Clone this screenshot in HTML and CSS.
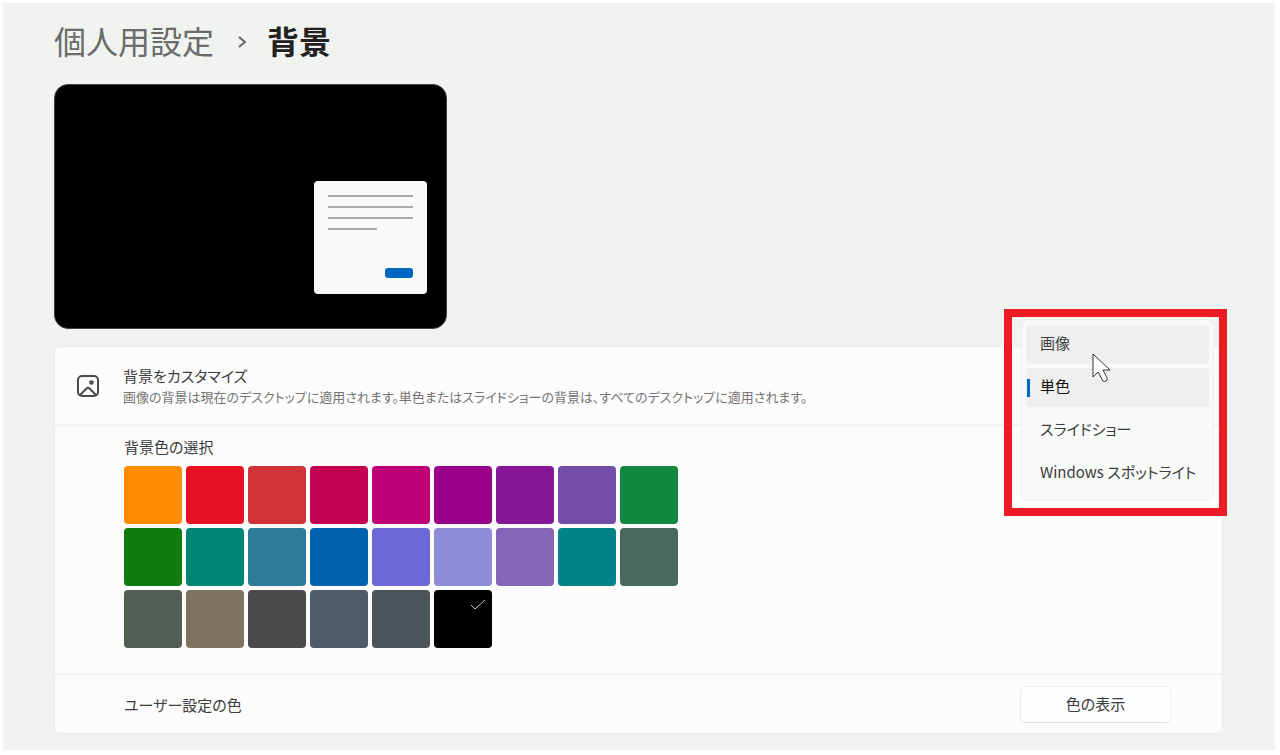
FILE: index.html
```html
<!DOCTYPE html>
<html lang="ja">
<head>
    <meta charset="UTF-8">
    <meta name="viewport" content="width=device-width, initial-scale=1.0">
    <title>個人用設定 - 背景</title>
    <link rel="stylesheet" href="styles.css">
</head>
<body>
    <main class="settings">
        <h1 class="breadcrumb">
            <a href="#">個人用設定</a>
            <svg class="chevron" viewBox="0 0 10 14" aria-hidden="true"><path d="M2 2l6 5-6 5"/></svg>
            <span>背景</span>
        </h1>

        <div class="preview">
            <div class="window">
                <div class="line"></div>
                <div class="line"></div>
                <div class="line"></div>
                <div class="line short"></div>
                <div class="windowButton"></div>
            </div>
        </div>

        <div class="card">
            <section class="customize">
                <svg class="pictureIcon" viewBox="0 0 24 24" aria-hidden="true">
                    <rect x="2" y="2" width="20" height="20" rx="4"/>
                    <path d="M4 21l6.500-6.500a2.200 2.200 0 0 1 3 0L20 21"/>
                    <circle cx="15.500" cy="8.500" r="1.300"/>
                </svg>
                <div>
                    <label class="title" for="backgroundType">背景をカスタマイズ</label>
                    <p class="description">画像の背景は現在のデスクトップに適用されます。単色またはスライドショーの背景は、すべてのデスクトップに適用されます。</p>
                </div>

                <div class="highlight">
                    <select class="menu" id="backgroundType" size="4">
                        <option class="hover">画像</option>
                        <option selected>単色</option>
                        <option>スライドショー</option>
                        <option>Windows スポットライト</option>
                    </select>
                    <svg class="cursor" viewBox="0 0 20 32" aria-hidden="true">
                        <path d="M1 1v23l5-5 5 9q1 1 3 0t1-3l-4-8h7z"/>
                    </svg>
                </div>
            </section>

            <section class="colors">
                <h2 class="title">背景色の選択</h2>
                <div class="swatches">
                    <button class="swatch orange" aria-label="オレンジ"></button>
                    <button class="swatch red" aria-label="赤"></button>
                    <button class="swatch brick" aria-label="れんが色"></button>
                    <button class="swatch rose" aria-label="ローズ"></button>
                    <button class="swatch magenta" aria-label="マゼンタ"></button>
                    <button class="swatch plum" aria-label="プラム"></button>
                    <button class="swatch violet" aria-label="バイオレット"></button>
                    <button class="swatch iris" aria-label="アイリス"></button>
                    <button class="swatch green" aria-label="緑"></button>
                    <button class="swatch forest" aria-label="深緑"></button>
                    <button class="swatch seafoam" aria-label="シーフォーム"></button>
                    <button class="swatch coolBlue" aria-label="クールブルー"></button>
                    <button class="swatch blue" aria-label="青"></button>
                    <button class="swatch indigo" aria-label="インディゴ"></button>
                    <button class="swatch lavender" aria-label="ラベンダー"></button>
                    <button class="swatch orchid" aria-label="オーキッド"></button>
                    <button class="swatch teal" aria-label="青緑"></button>
                    <button class="swatch moss" aria-label="モス"></button>
                    <button class="swatch sage" aria-label="セージ"></button>
                    <button class="swatch camel" aria-label="キャメル"></button>
                    <button class="swatch charcoal" aria-label="チャコール"></button>
                    <button class="swatch slate" aria-label="スレート"></button>
                    <button class="swatch steel" aria-label="スチール"></button>
                    <button class="swatch black" aria-label="黒" aria-pressed="true">
                        <svg class="check" viewBox="0 0 16 12" aria-hidden="true"><path d="M1 6l4 4 10-9"/></svg>
                    </button>
                </div>
            </section>

            <section class="custom">
                <h2 class="title">ユーザー設定の色</h2>
                <button class="showColors">色の表示</button>
            </section>
        </div>
    </main>
</body>
</html>
```
FILE: styles.css
```css
* {
    box-sizing: border-box;
}

body {
    margin: 3px 5px 5px 3px;
    background-color: #ffffff;
    color: #3c3c3c;
    font-family: "Noto Sans CJK JP", sans-serif;
    font-size: 15px;
    font-feature-settings: "palt";
}

h1, h2, p {
    margin: 0;
}

button, select {
    font: inherit;
    font-feature-settings: inherit;
    color: inherit;
}

.settings {
    padding: 13px 52px 16px 51px;
    background-color: #f1f3f0;
}

.breadcrumb {
    display: flex;
    align-items: center;
    margin-bottom: 20px;
    font-size: 32px;
    line-height: 48px;
    font-weight: 500;
    font-feature-settings: normal;
    color: #222222;
}

.breadcrumb a {
    color: #6a6b6a;
    font-weight: 400;
    text-decoration: none;
}

.breadcrumb span {
    font-weight: 700;
}

.chevron {
    width: 10px;
    height: 14px;
    margin: 4px 20px 0 23px;
    fill: none;
    stroke: #666666;
    stroke-width: 2;
}

.preview {
    display: flex;
    justify-content: flex-end;
    align-items: flex-end;
    width: 393px;
    height: 245px;
    padding: 0 19px 34px;
    background-color: #000000;
    border: 1px solid #444444;
    border-radius: 14px;
}

.window {
    display: flex;
    flex-direction: column;
    gap: 9px;
    width: 113px;
    height: 113px;
    padding: 14px 14px 16px;
    background-color: #f8faf8;
    border-radius: 4px;
}

.line {
    height: 2px;
    background-color: #aaaaaa;
}

.short {
    width: 49px;
}

.windowButton {
    width: 28px;
    height: 10px;
    margin-top: auto;
    align-self: flex-end;
    background-color: #0067c0;
    border-radius: 3px;
}

.card {
    margin-top: 17px;
    background-color: #fcfcfc;
    border: 1px solid #ececeb;
    border-radius: 6px;
}

.title {
    display: block;
    font-size: 15px;
    line-height: 22px;
    font-weight: 400;
}

.description {
    color: #757575;
    font-size: 13px;
    line-height: 20px;
}

.customize {
    position: relative;
    display: flex;
    gap: 23px;
    padding: 18px 220px 17px 21px;
}

.pictureIcon {
    flex: none;
    width: 24px;
    height: 24px;
    margin-top: 9px;
    fill: none;
    stroke: #4a4a4a;
    stroke-width: 2;
}

.highlight {
    position: absolute;
    top: -38px;
    right: -5px;
    padding: 2px 5px 7px 9px;
    border: 8px solid #ed1c24;
}

.menu {
    appearance: none;
    display: block;
    width: 193px;
    height: 182px;
    padding: 5px 4px;
    overflow: hidden;
    background-color: #f8faf8;
    border: 1px solid #eeeeee;
    border-radius: 8px;
    outline: none;
}

.menu option {
    height: 39px;
    margin-bottom: 4px;
    padding: 7px 14px;
    border-radius: 4px;
}

.menu .hover {
    background-color: #efefef;
}

/* blue marker on the left of the selected entry */
.menu option:checked {
    background-image: linear-gradient(#0067c0, #0067c0), linear-gradient(#efefef, #efefef);
    background-repeat: no-repeat;
    background-position: 1px center, 0 0;
    background-size: 3px 18px, 100% 100%;
}

.cursor {
    position: absolute;
    top: 36px;
    left: 80px;
    width: 20px;
    height: 32px;
    fill: #ffffff;
    stroke: #333333;
    stroke-width: 1;
}

.colors {
    padding: 10px 69px 25px;
    border-top: 2px solid #f3f3f3;
}

.swatches {
    display: grid;
    grid-template-columns: repeat(9, 58px);
    gap: 4px;
    margin-top: 8px;
}

.swatch {
    display: flex;
    justify-content: flex-end;
    height: 58px;
    padding: 9px 6px;
    border: none;
    border-radius: 4px;
    cursor: pointer;
}

.check {
    width: 16px;
    height: 12px;
    fill: none;
    stroke: #cccccc;
    stroke-width: 1;
}

.orange { background-color: #ff8c00; }
.red { background-color: #e81123; }
.brick { background-color: #d13438; }
.rose { background-color: #c30052; }
.magenta { background-color: #bf0077; }
.plum { background-color: #9a0089; }
.violet { background-color: #881798; }
.iris { background-color: #744da9; }
.green { background-color: #10893e; }
.forest { background-color: #107c10; }
.seafoam { background-color: #018574; }
.coolBlue { background-color: #2d7d9a; }
.blue { background-color: #0063b1; }
.indigo { background-color: #6b69d6; }
.lavender { background-color: #8e8cd8; }
.orchid { background-color: #8764b8; }
.teal { background-color: #038387; }
.moss { background-color: #486860; }
.sage { background-color: #525e54; }
.camel { background-color: #7e735f; }
.charcoal { background-color: #4c4a48; }
.slate { background-color: #515c6b; }
.steel { background-color: #4a5459; }
.black { background-color: #000000; }

.custom {
    display: flex;
    justify-content: space-between;
    align-items: center;
    padding: 11px 51px 10px 69px;
    border-top: 2px solid #f3f3f3;
}

.showColors {
    width: 151px;
    height: 37px;
    padding: 0 0 2px;
    background-color: #fdfeff;
    border: 1px solid #eeeeee;
    border-bottom-color: #dcdcdc;
    border-radius: 5px;
    cursor: pointer;
}
```
